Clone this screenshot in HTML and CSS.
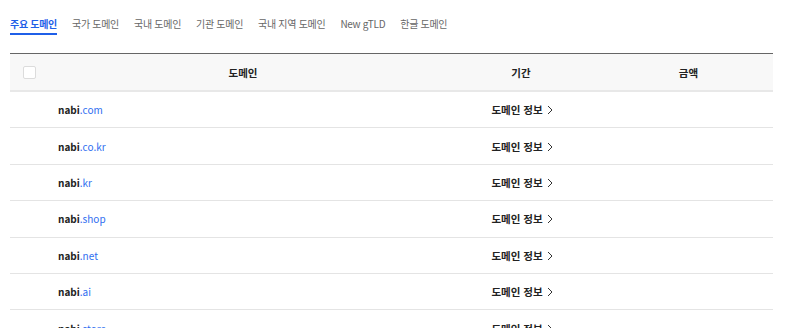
FILE: index.html
```html
<!DOCTYPE html>
<html lang="ko">
<head>
<meta charset="utf-8">
<link rel="stylesheet" href="styles.css">
</head>
<body>
<div class="wrap">
  <nav class="tabs">
    <a class="tab active">주요 도메인</a>
    <a class="tab">국가 도메인</a>
    <a class="tab">국내 도메인</a>
    <a class="tab">기관 도메인</a>
    <a class="tab">국내 지역 도메인</a>
    <a class="tab">New gTLD</a>
    <a class="tab">한글 도메인</a>
  </nav>
  <table class="grid">
    <colgroup>
      <col class="c-check"><col class="c-domain"><col class="c-period"><col class="c-price">
    </colgroup>
    <thead>
      <tr>
        <th><span class="check"></span></th>
        <th>도메인</th>
        <th>기간</th>
        <th>금액</th>
      </tr>
    </thead>
    <tbody>
      <tr><td></td><td class="dom"><b>nabi</b><span class="tld">.com</span></td><td class="info">도메인 정보<svg class="arr" viewBox="0 0 6 10" width="6" height="10"><polyline points="1,1 5,5 1,9"/></svg></td><td></td></tr>
      <tr><td></td><td class="dom"><b>nabi</b><span class="tld">.co.kr</span></td><td class="info">도메인 정보<svg class="arr" viewBox="0 0 6 10" width="6" height="10"><polyline points="1,1 5,5 1,9"/></svg></td><td></td></tr>
      <tr><td></td><td class="dom"><b>nabi</b><span class="tld">.kr</span></td><td class="info">도메인 정보<svg class="arr" viewBox="0 0 6 10" width="6" height="10"><polyline points="1,1 5,5 1,9"/></svg></td><td></td></tr>
      <tr><td></td><td class="dom"><b>nabi</b><span class="tld">.shop</span></td><td class="info">도메인 정보<svg class="arr" viewBox="0 0 6 10" width="6" height="10"><polyline points="1,1 5,5 1,9"/></svg></td><td></td></tr>
      <tr><td></td><td class="dom"><b>nabi</b><span class="tld">.net</span></td><td class="info">도메인 정보<svg class="arr" viewBox="0 0 6 10" width="6" height="10"><polyline points="1,1 5,5 1,9"/></svg></td><td></td></tr>
      <tr><td></td><td class="dom"><b>nabi</b><span class="tld">.ai</span></td><td class="info">도메인 정보<svg class="arr" viewBox="0 0 6 10" width="6" height="10"><polyline points="1,1 5,5 1,9"/></svg></td><td></td></tr>
      <tr><td></td><td class="dom"><b>nabi</b><span class="tld">.store</span></td><td class="info">도메인 정보<svg class="arr" viewBox="0 0 6 10" width="6" height="10"><polyline points="1,1 5,5 1,9"/></svg></td><td></td></tr>
    </tbody>
  </table>
</div>
</body>
</html>
```
FILE: styles.css
```css
html, body { margin: 0; padding: 0; background: #fff; }
body {
  font-family: "Noto Sans CJK KR", "Noto Sans", sans-serif;
  font-size: 11px;
  color: #222;
  overflow: hidden;
}
.wrap { padding: 0 27px 0 10px; }
.tabs {
  display: flex;
  gap: 15px;
  padding-top: 14px;
  height: 21px;
}
.tab {
  color: #666;
  font-size: 10px;
  letter-spacing: -0.3px;
  line-height: 19px;
  height: 19px;
  border-bottom: 2px solid transparent;
  white-space: nowrap;
}
.tab.active {
  color: #1f5fe8;
  font-weight: 700;
  border-bottom-color: #1f5fe8;
}
.grid {
  margin-top: 18px;
  width: 763px;
  border-collapse: collapse;
  table-layout: fixed;
}
.c-check { width: 38px; }
.c-domain { width: 390px; }
.c-period { width: 166px; }
.c-price { width: 169px; }
thead tr { background: #f8f8f8; border-top: 1px solid #666; border-bottom: 2px solid #e8e8e8; }
th {
  height: 36px;
  padding: 0;
  font-weight: 700;
  font-size: 10.5px;
  color: #222;
  text-align: center;
  vertical-align: middle;
}
th:first-child { text-align: left; }
.check {
  display: block;
  width: 11px;
  height: 11px;
  margin-left: 13px;
  border: 1px solid #dcdcdc;
  border-radius: 2px;
  background: #fff;
}
tbody tr { border-bottom: 1px solid #e4e4e4; }
td { height: 35.4px; padding: 0; vertical-align: middle; }
.dom { padding-left: 10px; font-size: 10px; }
.dom b { color: #222; font-weight: 700; }
.tld { color: #2f6ef0; }
.info { text-align: center; font-weight: 700; font-size: 10.5px; color: #222; padding-left: 2px; }
.arr {
  display: inline-block;
  vertical-align: -1px;
  margin-left: 4px;
  fill: none;
  stroke: #333;
  stroke-width: 1;
}
```
